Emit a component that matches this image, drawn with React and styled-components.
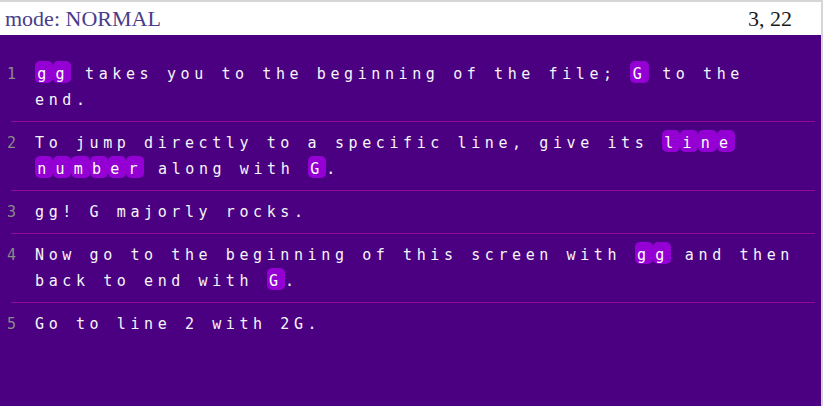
import React from "react";
import styled, { createGlobalStyle } from "styled-components";

const GlobalStyle = createGlobalStyle`
  html, body {
    margin: 0;
    padding: 0;
    background: #4b0082;
  }
  #root {
    min-height: 100vh;
  }
`;

const Frame = styled.div`
  min-height: 100vh;
  box-sizing: border-box;
  border-top: 2px solid #d6d6d6;
  border-right: 2px solid #d6d6d6;
  background: #4b0082;
  display: flex;
  flex-direction: column;
`;

const StatusBar = styled.div`
  height: 33px;
  display: flex;
  align-items: center;
  justify-content: space-between;
  padding: 0 29px 0 5px;
  background: #ffffff;
  font-family: "Liberation Serif", "Times New Roman", serif;
  font-size: 22px;
  line-height: 33px;
`;

const Mode = styled.span`
  color: #483d8b;
`;

const Cursor = styled.span`
  color: #1a1a1a;
`;

const Buffer = styled.div`
  padding-top: 18px;
  font-family: "DejaVu Sans Mono", "Liberation Mono", monospace;
  font-size: 15px;
`;

const Line = styled.div`
  display: flex;
  padding: 8px 21px 8px 7px;
  line-height: 26px;
`;

const Gutter = styled.span`
  flex: 0 0 28px;
  color: #8a8a8a;
`;

const Text = styled.span`
  flex: 1;
  color: #f6f6fa;
  letter-spacing: 4.6px;
`;

const Word = styled.span`
  white-space: nowrap;
`;

const Key = styled.span`
  display: inline-block;
  vertical-align: top;
  height: 19px;
  padding: 3px 2.3px 0;
  line-height: 20px;
  background: #9400d3;
  border-radius: 5px;
  color: #ffffff;
`;

const Divider = styled.div`
  flex: 0 0 1px;
  height: 1px;
  margin: 0 6px 0 11px;
  background: #920a96;
`;

const lines = [
  [{ k: "gg" }, " takes you to the beginning of the file; ", { k: "G" }, " to the end."],
  [
    "To jump directly to a specific line, give its ",
    { k: "line" },
    " ",
    { k: "number" },
    " along with ",
    { k: "G" },
    ".",
  ],
  ["gg! G majorly rocks."],
  [
    "Now go to the beginning of this screen with ",
    { k: "gg" },
    " and then back to end with ",
    { k: "G" },
    ".",
  ],
  ["Go to line 2 with 2G."],
];

function Highlight({ word }) {
  return (
    <Word>
      {word.split("").map((ch, i) => (
        <Key key={i}>{ch}</Key>
      ))}
    </Word>
  );
}

export default function App() {
  return (
    <>
      <GlobalStyle />
      <Frame>
        <StatusBar>
          <Mode>mode: NORMAL</Mode>
          <Cursor>3, 22</Cursor>
        </StatusBar>
        <Buffer>
          {lines.map((parts, n) => (
            <React.Fragment key={n}>
              {n > 0 && <Divider />}
              <Line>
                <Gutter>{n + 1}</Gutter>
                <Text>
                  {parts.map((p, i) =>
                    typeof p === "string" ? (
                      <React.Fragment key={i}>{p}</React.Fragment>
                    ) : (
                      <Highlight key={i} word={p.k} />
                    )
                  )}
                </Text>
              </Line>
            </React.Fragment>
          ))}
        </Buffer>
      </Frame>
    </>
  );
}
